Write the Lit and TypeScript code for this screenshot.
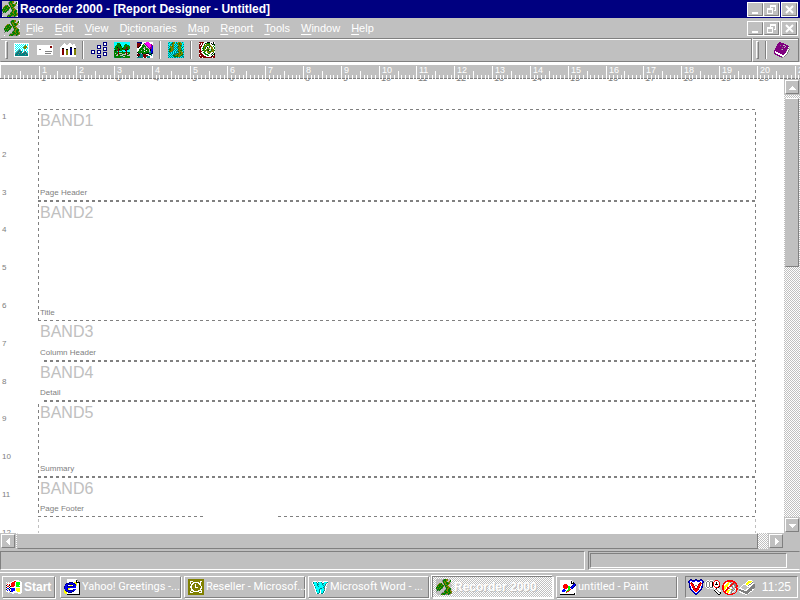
import { LitElement, html, svg, css, nothing } from "lit";
import { customElement, property } from "lit/decorators.js";
import { classMap } from "lit/directives/class-map.js";

const PALETTE: Record<string, string> = {
  k: "#000000", g: "#008000", o: "#808000", c: "#00ffff", t: "#008080", w: "#ffffff",
  s: "#c0c0c0", d: "#808080", n: "#000080", r: "#800000", R: "#ff0000", p: "#800080",
  P: "#ff00ff", b: "#0000ff", y: "#ffff00", G: "#00ff00",
};

// Each icon is a grid of palette letters; a dot is a clear pixel.
const ICONS: Record<string, string[]> = {
  recorder: [
    "sssssssdggoosssw",
    "ssssssdgggoossgw",
    "ssssssdgogossogw",
    "sssssssgooggooss",
    "sssoogsdgogggosw",
    "ssogggosgoogosss",
    "sogggoggdggossss",
    "sgoggggosgooosss",
    "ggggoggssdggoosw",
    "gogoggdsssgooggs",
    "dggggssssdgogggs",
    "sgdgssssdgooggos",
    "dsssssssgggoggoo",
    "ssssssddogggoggo",
    "sssssdggggooggod",
    "wssssgoggdddgdsw",
  ],
  picture: [
    "wwwwwwwwwwwwwww",
    "wcwcwcwcwcwcwcw",
    "wwcwcwcwcwcowcw",
    "wcwcwcwcwcoooww",
    "wwcwcwcwcoooocw",
    "wcwcwcwcwcoowcw",
    "wwcwcdcwcwcwcww",
    "wcwcdtdwcwcwcww",
    "wwcdttttcwdtwcw",
    "wcdttdttwdttdcw",
    "wdtttttdtttttdw",
    "wtttdttttttdttw",
    "wtttttttttttttw",
    "wwwwwwwwwwwwwww",
  ],
  card: [
    "wwwwwwwwwwwwwwww",
    "wwwwwwwwwwwwwrrw",
    "wwwwwwwwwwwwwrrw",
    "wwwwwwwwwwwwwwww",
    "wwddwwwwwwwwwwww",
    "wwwwwwwwwwwwwwww",
    "wwwwwwwwdddddddw",
    "wwwwwwwwwwwwwwww",
    "wwwwwwwwddddddww",
    "wwwwwwwwwwwwwwww",
  ],
  chart: [
    "....w....ww.....",
    "...www..wwww.ww.",
    "..wwwwwwwwwwwww.",
    ".wwwwwwwwwwwwwww",
    "wwwwwwwwwwkkwwww",
    "wwkkwwwwwwnnwwkk",
    "wwrrwwkkwwnnwwoo",
    "wwrrwwoowwnnwwoo",
    "wwrrwwoowwnnwwoo",
    "wwrrwwoowwnnwwoo",
    "wwrrwwoowwnnwwoo",
    "wwrrwwoowwnnwwoo",
    "wwwwwwwwwwwwwwww",
    "wwwwwwwwwwwwwwww",
  ],
  tree: [
    "............nnnn",
    "............nwwn",
    "............nwwn",
    "......nnnn..nnnn",
    "......nwwn......",
    "......nwwn..nnnn",
    "......nnnn..nwwn",
    "............nwwn",
    "nnnn..nnnn..nnnn",
    "nwwn..nwwn......",
    "nwwn..nwwn..nnnn",
    "nnnn..nnnn..nwwn",
    "............nwwn",
    "......nnnn..nnnn",
    "......nwwn......",
    "......nnnn......",
  ],
  habitat: [
    "cccccccccccccccc",
    "cccgggcccccccccc",
    "cccggggccccggccc",
    "ccggggkcccgggggc",
    "cgggggggccgggggg",
    "cggkggggcgggrrgg",
    "ggggrgggkgggrggg",
    "cgggrkggggrrrkgc",
    "gkgrrgggccckrccc",
    "gggcrcccgcccrccc",
    "ggggrggggggrrggg",
    "gsggrsssgggsrsgg",
    "gggsrgggssssrggs",
    "ggssggsssggggsss",
    "gggggggggssggggg",
    "tggggggttggggggg",
  ],
  species: [
    "nnnnnwwwwPPPwwww",
    "rrrnnwwpPPPPPwww",
    "rrrrwwgspPPPPPpw",
    "rrrkwgggspPPPPpp",
    "rrkwwggggspPPPpb",
    "rkwwgggsgsspPppb",
    "wwwgggssgggspppb",
    "wwgggggwggggskbb",
    "wwggsggggwggskbb",
    "wggggggwggggstbn",
    "kgggggggggggttbn",
    "wkttskgggkkkttkn",
    "rrktttrrrwwwkktw",
    "krrtttrrrrrwwwtw",
    "wkttttrrrttttwww",
    "ttttttwrrwtttwww",
  ],
  map: [
    "ctcctooctcoooctc",
    "tcctgooctoogoocc",
    "ccttooctctogooct",
    "tctcootctcoogtcc",
    "ctoogoctctgootct",
    "tcooootcttooocgc",
    "ctgootctctoootcc",
    "tggoootctcgootct",
    "cogootctctooggtc",
    "tgootctcttgoooct",
    "cttctctctctogoot",
    "tctctctttgoogooc",
    "ctctctttoogooogt",
    "tctctggoogooogtc",
    "ctctctggggootctt",
    "tctctcttctctctct",
  ],
  snake: [
    "rrrrrwwwkkkwwwkw",
    "wrwrwwkggggwkwkw",
    "rrwrwgwooogwwkgk",
    "rwrwwgooggoowwwg",
    "rrrwgoogwwgoowgw",
    "rrwwgogwksgwoowg",
    "rrwggogwooswoowg",
    "wrwwgowoggosgoow",
    "rrwggogogkwsgoog",
    "rrrwwgowooggooow",
    "rrwwggwwoooowwgw",
    "wrrwwggwwggwwkwk",
    "rrrrwwgggwwwgwgk",
    "rwrrrwwwggwwwkwr",
    "rrrrrrrwwwwwkrrr",
    "wrrwrrrrrrrrrwrr",
  ],
  book: [
    ".....pp.........",
    "....pppppp......",
    "...ppppppppp....",
    "...pppdppssppp..",
    "..pppppppppsppp.",
    "..ppppppdpspppw.",
    ".pppppppppppppd.",
    ".ppppppdspppp.wd",
    "pppppppppppppwd.",
    "pwpppppppppp.wd.",
    "pwwwppppppppwd..",
    "ppwwwwpppppwwd..",
    ".pppwwwwppwwd...",
    "...pppwwwwwd....",
    ".....pppwwd.....",
    ".......dd.......",
  ],
  flag: [
    "........wwwww...",
    "......wwRRwwwww.",
    "w.w.wwRRRwGGGGww",
    ".wwwwRRRRwGGGGww",
    "wRwRwRRRRwGGGGww",
    "kw.kwRRRRwGGGwww",
    "wRRwkRRRwwGGGGww",
    "kwwkwwwwwwwwwwww",
    "wbbwkbbbbwyyyyww",
    "kw.kwbbbbwyyyyww",
    "wbwbwbbbbwyyyyww",
    "wwwwkbbwwwwyyyww",
    "..w.wwwwwwwwwwww",
    "......ww....www.",
  ],
  explorer: [
    "...wwwwwwwwww...",
    "...wwwwwwwwwkd..",
    "...wwwwwwwwwkwd.",
    "...wwnnnnwyykkkk",
    "..nnnbbbbnnyywwk",
    ".nbbnnnnnbbnywwk",
    ".bbnwwyywnbbywwk",
    "nbbnnnnnnnbbwwwk",
    "nbbbbbbbbbbbwwwk",
    "nbbnyywwwwwwwwwk",
    ".bbnywwwwnbbwwwk",
    "ynbbnnnnnbbwwwwk",
    "yynnbbbbnnwwwwwk",
    "yyywnnnnwwwwwwwk",
    ".yywwwwwwwwwwwwk",
    "...kkkkkkkkkkkkk",
  ],
  outlook: [
    "oooooooooooooooo",
    "oooooooooooooooo",
    "oowwwooooooowwoo",
    "oowoowwwwwwowooo",
    "oowowwoooowwwooo",
    "ooowwoowooowwooo",
    "ooowooowoooowooo",
    "oowwooowooooowoo",
    "oowwooowwwooowoo",
    "ooowoooooooowwoo",
    "ooowwooooooowooo",
    "ooowwwoooowwwwoo",
    "oowoowwwwwwoowoo",
    "oowwwoooooowwwoo",
    "oooooooooooooooo",
    "oooooooooooooooo",
  ],
  word: [
    ".wwww.wwww.wwwww",
    "wtcctwtcctwwccct",
    "wtccctccccttccdw",
    ".wcccttccctcctw.",
    ".wtcctccccctcdw.",
    "..wccctccccctw..",
    "..wtccccccctdww.",
    "..wcccccttcctw..",
    "...wccctccccdw..",
    "...wtcctwccctw..",
    "...wccctwcctw...",
    "....wcctwcctw...",
    "....wttwwttw....",
  ],
  paint: [
    "wwwwwwwwwwww....",
    "wwwwwwwwwwwkw...",
    "wwwwwwwwwwwkwk..",
    "wwwwwwwwwwwkkkn.",
    "wwwwRRRwwwwwwnbn",
    "wwwRRRRRwwwwnbbn",
    "wwwRRRRRGGwnbbnw",
    "wwwRRRRRGGnbbnww",
    "wwwwRRRwGGwbnwww",
    "wwwbbwwwGGRwwwww",
    "wwbbbbwGGRwwwwww",
    "wwbbbwGRRwwwwwww",
    "wwwwwwRwwwwwwwww",
    "wwwwwwwwwwwwwwkw",
    "kkkkkkkkkkkkkkkw",
  ],
  shield: [
    "..nn...nn...nn..",
    ".nbbnnnbbnnnbbn.",
    "nbwwbbbwwbbbwwbn",
    "nbwrwwwwwwwwrwbn",
    ".nRRrwwwwwwrRRn.",
    ".nwRRrwwwwrRRwn.",
    ".nwRRRwddwRRRwn.",
    ".nbwRRrwwrRRwbn.",
    ".nbwrRRwwRRrwbn.",
    "..nwwRRrrRRwwn..",
    "..nbwrRRRRrwbn..",
    "...nbwRRRRwbn...",
    "....nbwRRwbn....",
    ".....nbwwbn.....",
    "......nbbn......",
    ".......nn.......",
  ],
  search: [
    "..ww.www..RRR...",
    ".wddwdddwRwwwR..",
    "wdwwdwwkRwwkwwR.",
    "wdwwdwwkRwwkwwR.",
    "wdwwdwwkRwkkkwR.",
    "wdwwdwwkRwwwwwR.",
    "wdwwdwwkwRwwwRk.",
    ".wddwdddwwRRRk..",
    "..ww.www.wwkww..",
    ".........wddwww.",
    ".........kwwdwww",
    "..........kwwdww",
    "...........kwwdk",
    "............kwwk",
    ".............kk.",
  ],
  blocked: [
    ".....RRRRRR.....",
    "...RRRRRRRRRR...",
    "..RRwwyydssRRR..",
    ".RRwwyywwdRRdRR.",
    ".RwwyyywdRRdddR.",
    "RRwyyywwRRswddRR",
    "RRyyyywRRddwsdRR",
    "RRyywRRswwdssRR",
    "RRyywRRdwwsdswRR",
    "RRywRRwwyddsdwRR",
    ".RwRRyyywsddwsR.",
    ".RRRyyywwdswssR.",
    "..RRwyywsdwssR..",
    "...RRRwwsdRRR...",
    ".....RRRRRR.....",
  ],
  printer: [
    ".........wwww...",
    "........wyyyyw..",
    ".......wyyyywd..",
    "......wyyywwdww.",
    "....wwwyywddwwdd",
    "...wssswwdwwwddd",
    "..wssssswwwwdddd",
    ".wsssssssswddddd",
    "wwwssssswwddddd.",
    "ddwwwsswwddddww.",
    "dddddwwwdddddw..",
    "wwdddddddddww...",
    ".wwwddddddw.....",
    "...wwwdddw......",
    "......ww........",
  ],
};

const icon = (name: string) => {
  const rows = ICONS[name];
  const runs: unknown[] = [];
  rows.forEach((row, y) => {
    for (let x = 0; x < row.length; ) {
      const c = row[x];
      let end = x + 1;
      while (row[end] === c) end++;
      if (c !== ".") {
        runs.push(svg`<rect x=${x} y=${y} width=${end - x} height="1" fill=${PALETTE[c]}></rect>`);
      }
      x = end;
    }
  });
  return html`<svg width="16" height=${rows.length} viewBox="0 0 16 ${rows.length}"
    shape-rendering="crispEdges" aria-hidden="true">${runs}</svg>`;
};

const base = css`
  * { box-sizing: border-box; }
  button {
    margin: 0; padding: 0; border: 0; background: none; color: inherit; font: inherit;
    display: flex; align-items: center; justify-content: center; flex: none;
  }
  svg { display: block; flex: none; }
`;

@customElement("window-buttons")
class WindowButtons extends LitElement {
  static styles = [base, css`
    :host { display: flex; gap: 1px; margin-left: auto; padding-right: 3px; }
    .btn { width: 15px; height: 13px; border: 1px solid; border-color: #c0c0c0 #808080 #808080 #c0c0c0;
      outline: 1px solid #fff; background: #c0c0c0; }
    .last { margin-left: 2px; }
  `];
  render() {
    return html`
      <button class="btn" aria-label="Minimize">
        <svg width="11" height="9"><path d="M2 7h6v2h-6z" fill="#fff"></path></svg></button>
      <button class="btn" aria-label="Restore">
        <svg width="11" height="9" shape-rendering="crispEdges" fill="none" stroke="#fff">
          <path d="M4 1h6M4.5 1v2M3.5 .5h6v5h-2M1.5 4.5h5v4h-5zM1 3.5h6"></path></svg></button>
      <button class="btn last" aria-label="Close">
        <svg width="11" height="9"><path d="M2 1l7 7M9 1l-7 7" stroke="#fff" stroke-width="2"></path></svg></button>
    `;
  }
}

@customElement("scroll-bar")
class ScrollBar extends LitElement {
  @property({ type: Boolean, reflect: true }) vertical = false;
  static styles = [base, css`
    :host { display: flex; background: #c0c0c0; height: 16px; }
    :host([vertical]) { flex-direction: column; width: 16px; height: auto; }
    .btn { width: 16px; height: 16px; border: 1px solid #c0c0c0; background: #c0c0c0; }
    .face { width: 14px; height: 14px; display: flex; align-items: center; justify-content: center;
      border: 1px solid; border-color: #fff #808080 #808080 #fff; }
    .track { flex: 1; display: flex;
      background: repeating-conic-gradient(#c0c0c0 0 25%, #fff 0 50%) 0 0 / 2px 2px; }
    .thumb { flex: 1; margin: 0 10px 0 1px; background: #c0c0c0; border: 1px solid;
      border-color: #fff #808080 #808080 #fff; border-left-color: #c0c0c0; }
    :host([vertical]) .thumb { flex: 1; height: 40%; margin: 3px 1px 0; }
  `];
  render() {
    const [a, b] = this.vertical
      ? ["M1 6h7v1h-7zM2 5h5v1h-5zM3 4h3v1h-3zM4 3h1v1h-1z", "M1 3h7v1h-7zM2 4h5v1h-5zM3 5h3v1h-3zM4 6h1v1h-1z"]
      : ["M6 1v7h-1v-7zM5 2v5h-1v-5zM4 3v3h-1v-3zM3 4v1h-1v-1z", "M3 1v7h1v-7zM4 2v5h1v-5zM5 3v3h1v-3zM6 4v1h1v-1z"];
    const arrow = (d: string) => html`<span class="face"><svg width="9" height="9"
      shape-rendering="crispEdges"><path d=${d} fill="#fff"></path></svg></span>`;
    return html`
      <button class="btn" aria-label=${this.vertical ? "Scroll up" : "Scroll left"}>${arrow(a)}</button>
      <div class="track"><div class="thumb"></div></div>
      <button class="btn" aria-label=${this.vertical ? "Scroll down" : "Scroll right"}>${arrow(b)}</button>
    `;
  }
}

const CM = 37.8; // one centimetre at 96 dots per inch

@customElement("ruler-bar")
class RulerBar extends LitElement {
  @property({ type: Boolean, reflect: true }) vertical = false;
  static styles = [base, css`
    :host { display: block; height: 16px; }
    :host([vertical]) { height: auto; overflow: hidden; }
    svg { width: 100%; height: 18px; overflow: hidden; }
    :host([vertical]) svg { height: 100%; }
    text { font: 9px "Liberation Sans", Arial, sans-serif; fill: #fff; }
    .below, .side { fill: #808080; }
    .side { font-size: 8px; }
  `];
  render() {
    if (this.vertical) {
      return html`<svg>${Array.from({ length: 12 }, (_, i) =>
        svg`<text class="side" x="2" y=${Math.round(40 + i * CM)}>${i + 1}</text>`)}</svg>`;
    }
    const ticks = Array.from({ length: 220 }, (_, i) => i + 1);
    const cms = Array.from({ length: 21 }, (_, i) => i + 1);
    const at = (n: number) => Math.round(0.7 + n * CM);
    return html`<svg shape-rendering="crispEdges">
      <rect width="100%" height="18" fill="#fff"></rect>
      ${cms.map((n) => svg`<text class="below" x=${at(n) + 2} y="18" aria-hidden="true">${n}</text>`)}
      <rect y="2" x="1" width="100%" height="13" fill="#c0c0c0"></rect>
      <rect y="15" width="100%" height="1" fill="#808080"></rect>
      ${ticks.map((i) => {
        const top = i % 10 === 0 ? 3 : i % 5 === 0 ? 8 : 12;
        return svg`<rect x=${at(i / 10)} y=${top} width="1" height=${16 - top} fill="#fff"></rect>`;
      })}
      ${cms.map((n) => svg`<text x=${at(n) + 3} y="10">${n}</text>`)}
    </svg>`;
  }
}

interface Band { name: string; label: string; height: number; left: boolean; end: string; }

const BANDS: Band[] = [
  { name: "BAND1", label: "Page Header", height: 90, left: true, end: "double" },
  { name: "BAND2", label: "Title", height: 118, left: true, end: "single" },
  { name: "BAND3", label: "Column Header", height: 39, left: false, end: "double inset" },
  { name: "BAND4", label: "Detail", height: 38, left: false, end: "double inset" },
  { name: "BAND5", label: "Summary", height: 74, left: true, end: "double" },
  { name: "BAND6", label: "Page Footer", height: 38, left: true, end: "single broken" },
];

@customElement("report-page")
class ReportPage extends LitElement {
  static styles = [base, css`
    :host { display: flex; flex-direction: column; padding: 30px 28px 0 0; overflow: hidden;
      min-width: 0; font-family: "Liberation Sans", Arial, sans-serif; }
    .line { flex: none; height: 1px;
      background: repeating-linear-gradient(to right, #808080 0 3px, #fff 3px 6px); }
    .double { height: 2px; }
    .inset { margin-left: 6px; }
    .broken { background: linear-gradient(to right, transparent 166px, #fff 166px 240px, transparent 240px),
      repeating-linear-gradient(to right, #808080 0 3px, #fff 3px 6px); }
    .band, .tail { --dash: repeating-linear-gradient(to bottom, #fff 0 2px, #808080 2px 5px, #fff 5px 6px);
      flex: none; display: flex; flex-direction: column; justify-content: space-between;
      padding: 1px 2px 2px; background: var(--dash) right / 1px 100% no-repeat; }
    .both { background: var(--dash) left / 1px 100% no-repeat, var(--dash) right / 1px 100% no-repeat; }
    .tail { --dash: repeating-linear-gradient(to bottom, #fff 0 2px, #c0c0c0 2px 5px, #fff 5px 6px);
      flex: 1; }
    .name { margin: 0; font-size: 16px; line-height: 20px; font-weight: 400; color: #c0c0c0; }
    .label { font-size: 8px; line-height: 10px; color: #808080; }
  `];
  render() {
    return html`
      <div class="line"></div>
      ${BANDS.map((b) => html`
        <section class=${classMap({ band: true, both: b.left })} style="height:${b.height}px">
          <h2 class="name">${b.name}</h2>
          <span class="label">${b.label}</span>
        </section>
        <div class="line ${b.end}"></div>`)}
      <div class="tail both"></div>
    `;
  }
}

const MENUS = ["File", "Edit", "View", "Dictionaries", "Map", "Report", "Tools", "Window", "Help"];

const TOOLS: { icon: string; label: string }[][] = [
  [{ icon: "picture", label: "Picture" }, { icon: "card", label: "Card" }, { icon: "chart", label: "Chart" }],
  [{ icon: "tree", label: "Hierarchy" }, { icon: "habitat", label: "Habitats" }, { icon: "species", label: "Species" }],
  [{ icon: "map", label: "Map" }],
  [{ icon: "snake", label: "Records" }],
];

const TASKS = [
  { icon: "explorer", text: "Yahoo! Greetings -..." },
  { icon: "outlook", text: "Reseller - Microsof..." },
  { icon: "word", text: "Microsoft Word - ..." },
  { icon: "recorder", text: "Recorder 2000", active: true },
  { icon: "paint", text: "untitled - Paint" },
];

@customElement("app-root")
class AppRoot extends LitElement {
  static styles = [base, css`
    :host { display: flex; flex-direction: column; height: 100vh; overflow: hidden; background: #c0c0c0;
      color: #fff; font: 11px/16px "Liberation Sans", Arial, sans-serif; }
    .title { display: flex; align-items: center; gap: 2px; height: 18px; padding-left: 2px;
      background: #000080; flex: none; white-space: nowrap; }
    .title h1 { margin: 0; font-size: 12px; }
    .menu { display: flex; align-items: center; height: 20px; padding-left: 4px; flex: none; }
    .menu .item { padding: 0 5px 0 6px; display: block; }
    .menu u { text-underline-offset: 2px; }
    .tools { display: flex; height: 25px; flex: none; border-bottom: 1px solid #fff; }
    .group { display: flex; align-items: center; border: 1px solid; border-color: #808080 #fff #808080 #c0c0c0;
      box-shadow: inset 0 1px #fff; padding-left: 4px; }
    .main { flex: 1; border-right-color: #808080; }
    .side { width: 47px; border-left-color: #fff; border-right-color: #808080; margin-right: 1px; padding-left: 3px; }
    .grip { width: 3px; height: 18px; border: 1px solid; border-color: #fff #808080 #808080 #fff; }
    .sep { width: 2px; height: 18px; background: linear-gradient(to right, #808080 50%, #fff 50%); }
    .tool { width: 23px; height: 20px; }
    .set { display: flex; padding: 0 3px; }
    .first { padding: 0 3px 0 2px; }
    .work { flex: 1; min-height: 0; display: grid; grid-template-columns: 38px 1fr 16px;
      grid-template-rows: minmax(0, 1fr); position: relative; }
    .wrap { flex: 1; min-height: 0; display: flex; flex-direction: column; background: #fff; }
    .bottom { display: grid; grid-template-columns: 1fr 16px; background: #c0c0c0; flex: none; }
    .status { display: flex; gap: 3px; height: 22px; flex: none; padding-top: 2px; }
    .panel { flex: 1; height: 19px; border: 1px solid; border-color: #808080 #fff #fff #808080; }
    .last { flex: none; width: 212px; border-right-color: #c0c0c0; padding: 1px 12px 1px 1px; }
    .inner { height: 15px; border: 1px solid; border-color: #808080 #fff #fff #808080; }
    .task { display: flex; align-items: center; gap: 4px; height: 29px; border-top: 1px solid #c0c0c0;
      box-shadow: inset 0 1px #fff; padding: 2px 2px 0; flex: none; }
    .btn { height: 22px; padding-left: 3px; gap: 2px; justify-content: flex-start; border: 1px solid;
      border-color: #fff #808080 #808080 #fff; box-shadow: 1px 1px #fff; white-space: nowrap; }
    .start { width: 53px; font-weight: 700; font-size: 12px; }
    .list { display: flex; flex: 1; gap: 3px; min-width: 0; margin-left: 1px; }
    .entry { flex: 0 1 121px; min-width: 0; font-family: Roboto, "Liberation Sans", sans-serif; }
    .active { font: 700 12px/16px "Liberation Sans", Arial, sans-serif; border-color: #808080 #fff #fff #808080;
      box-shadow: -1px -1px #fff, 1px 1px #fff; text-shadow: 1px 1px #c0c0c0;
      background: repeating-conic-gradient(#c0c0c0 0 25%, #fff 0 50%) 0 0 / 2px 2px; }
    .tray { display: flex; align-items: center; gap: 1px; height: 22px; width: 113px; padding: 0 6px 0 2px;
      border: 1px solid; border-color: #808080 #fff #fff #808080; }
    .clock { margin-left: auto; font-size: 12px; }
  `];
  render() {
    return html`
      <header class="title">${icon("recorder")}
        <h1>Recorder 2000 - [Report Designer - Untitled]</h1>
        <window-buttons></window-buttons>
      </header>
      <nav class="menu">${icon("recorder")}
        ${MENUS.map((m) => {
          const k = m === "Dictionaries" ? 1 : 0;
          return html`<button class="item">${m.slice(0, k)}<u>${m[k]}</u>${m.slice(k + 1)}</button>`;
        })}
        <window-buttons></window-buttons>
      </nav>
      <div class="tools">
        <div class="group main"><span class="grip"></span>
          ${TOOLS.map((set, i) => html`
            ${i ? html`<span class="sep"></span>` : nothing}
            <div class=${classMap({ set: true, first: i === 0 })}>
              ${set.map((t) => html`<button class="tool" aria-label=${t.label}>${icon(t.icon)}</button>`)}
            </div>`)}
        </div>
        <div class="group side"><span class="grip"></span>
          <div class="set"></div><span class="sep"></span>
          <div class="set"><button class="tool" aria-label="Help book">${icon("book")}</button></div>
        </div>
      </div>
      <main class="wrap">
        <ruler-bar></ruler-bar>
        <div class="work">
          <ruler-bar vertical></ruler-bar>
          <report-page></report-page>
          <scroll-bar vertical></scroll-bar>
        </div>
        <div class="bottom"><scroll-bar></scroll-bar></div>
      </main>
      <div class="status">
        <div class="panel"></div>
        <div class="panel last"><div class="inner"></div></div>
      </div>
      <footer class="task">
        <button class="btn start">${icon("flag")}Start</button>
        <div class="list">
          ${TASKS.map((t) => html`<button class=${classMap({ btn: true, entry: true, active: !!t.active })}>
            ${icon(t.icon)}<span>${t.text}</span></button>`)}
        </div>
        <div class="tray">${["shield", "search", "blocked", "printer"].map(icon)}
          <time class="clock">11:25</time></div>
      </footer>
    `;
  }
}
